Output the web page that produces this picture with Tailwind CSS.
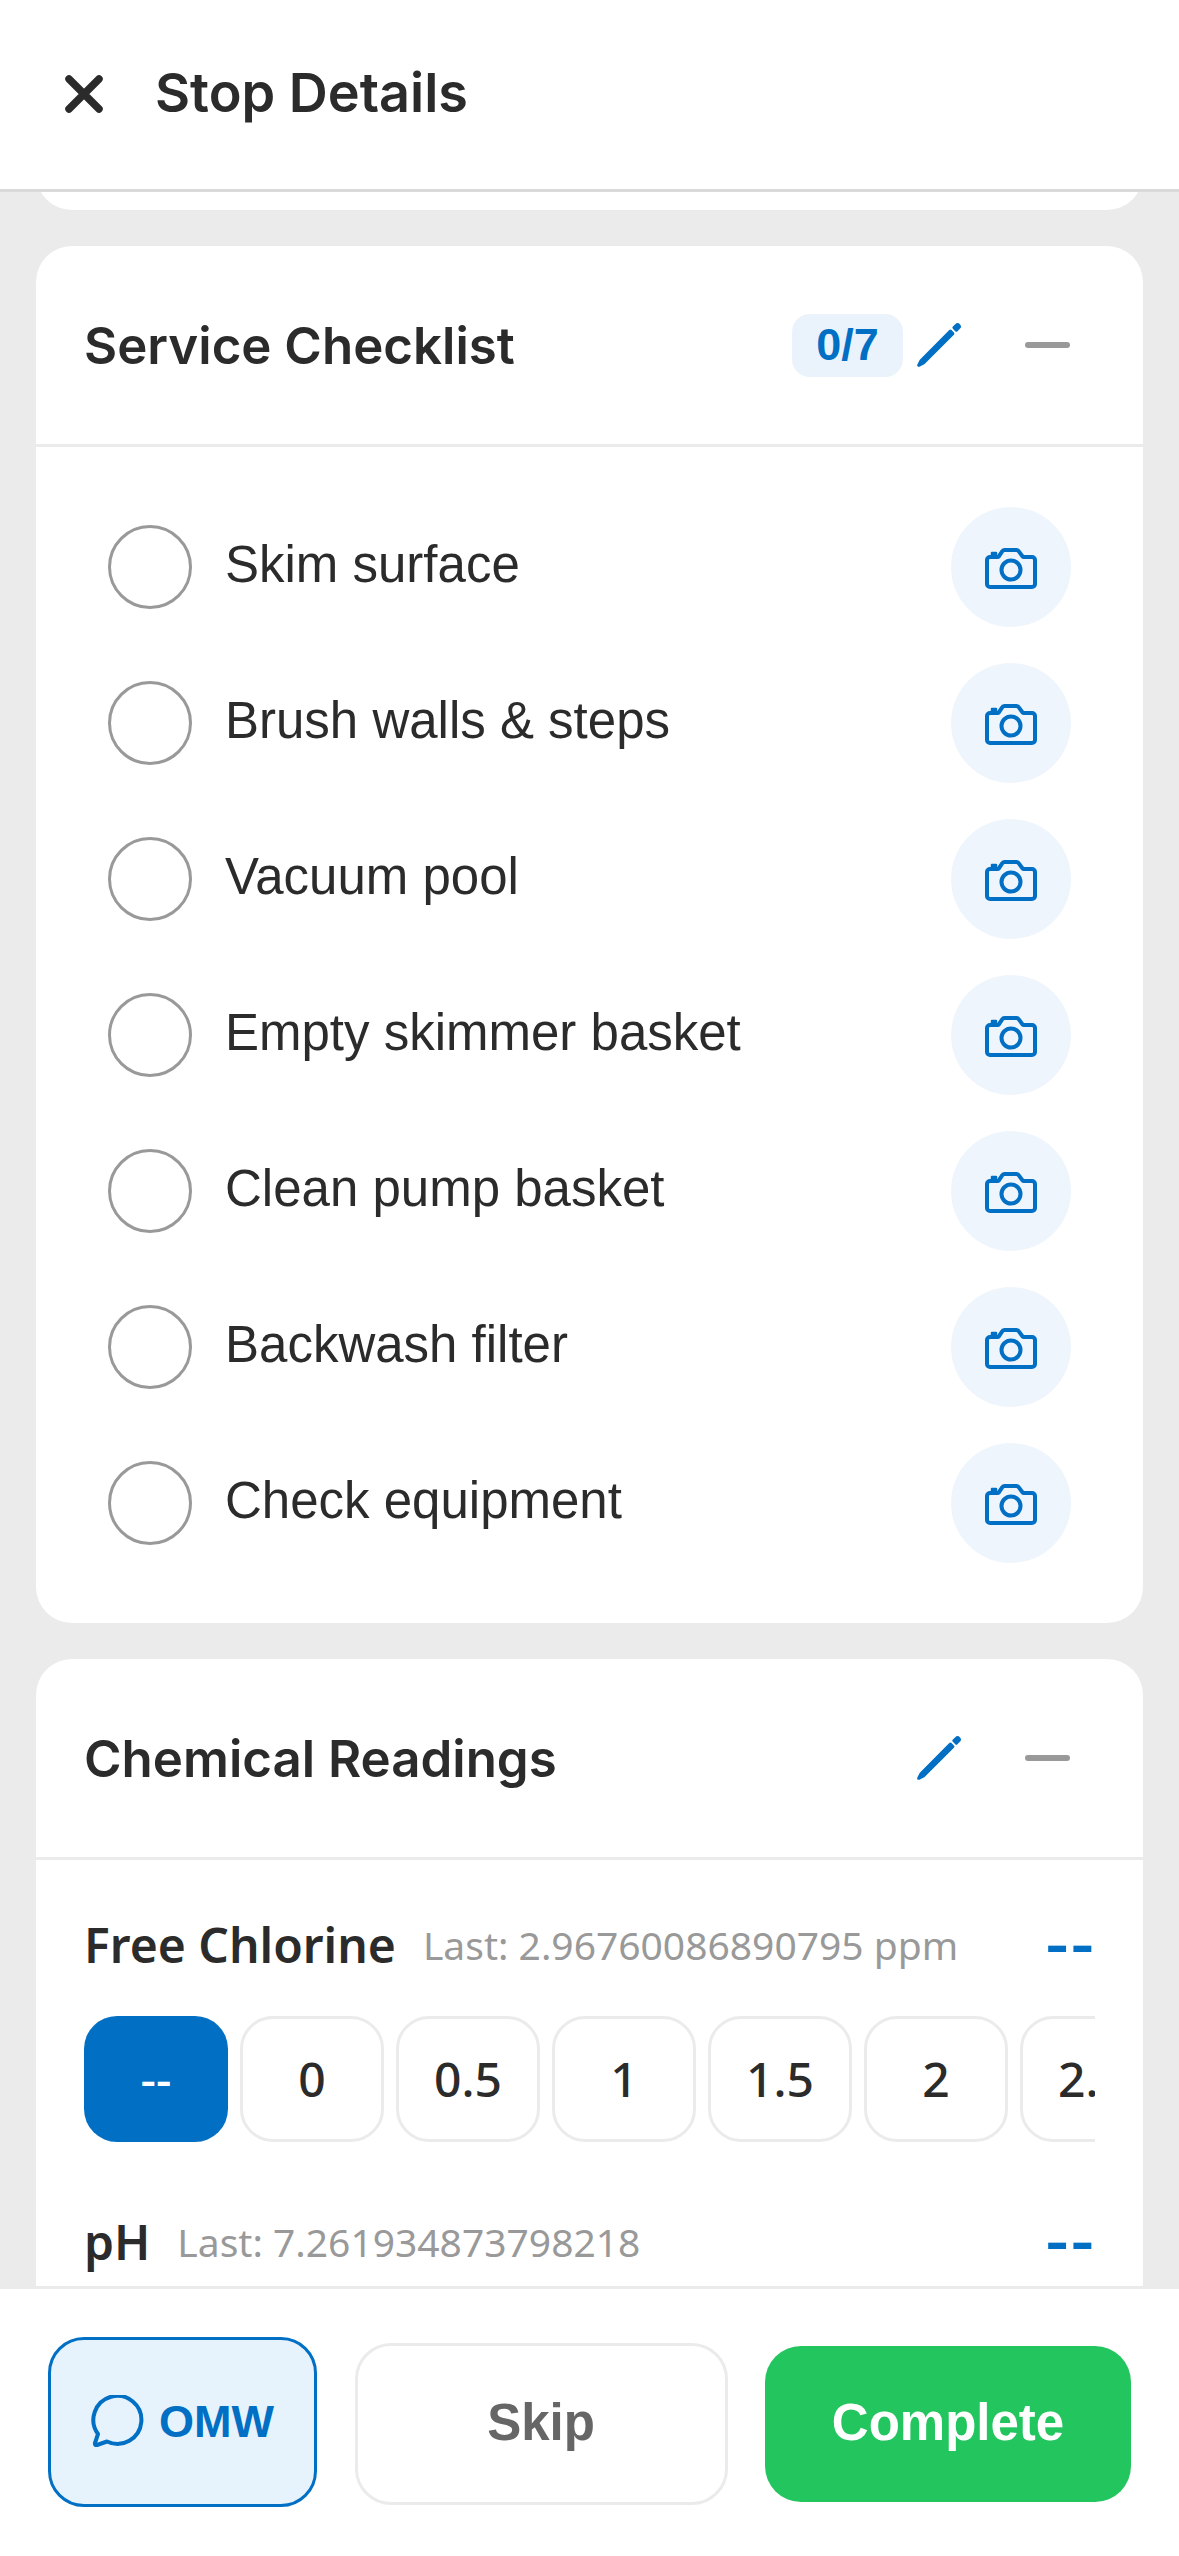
<!DOCTYPE html>
<html lang="en">
<head>
  <meta charset="UTF-8" />
  <meta name="viewport" content="width=device-width, initial-scale=1.0"/>
  <title>Stop Details</title>
  <script src="https://cdn.jsdelivr.net/npm/@tailwindcss/browser@4"></script>
</head>
<body class="h-screen flex flex-col overflow-hidden bg-[#ebebeb] text-[#2b2b2b] font-['Liberation_Sans',sans-serif]">

  <!-- header -->
  <div class="h-[192px] shrink-0 z-10 bg-white border-b-[3px] border-[#d9d9d9] flex items-center pl-[65px]">
    <svg class="w-[38px] h-[38px] mt-[-2px]" viewBox="0 0 38 38" fill="none" stroke="#2b2b2b" stroke-width="7.5" stroke-linecap="round"><path d="M4 4l30 30M34 4L4 34"/></svg>
    <h1 class="ml-[52px] mt-[-4px] text-[54px] leading-none font-semibold font-['Inter',sans-serif]">Stop Details</h1>
  </div>

  <div class="flex-1 min-h-0 overflow-hidden px-[36px]">
    <!-- previous card, scrolled away -->
    <div class="h-[100px] mt-[-82px] mb-[36px] bg-white rounded-[36px]"></div>

    <!-- service checklist -->
    <div class="bg-white rounded-[36px] mb-[36px]">
      <div class="h-[201px] border-b-[3px] border-[#ebebeb] flex items-center pl-[48px] pr-[73px]">
        <h2 class="flex-1 text-[51px] leading-none font-semibold font-['Inter',sans-serif]">Service Checklist</h2>
        <span class="w-[111px] h-[63px] rounded-[18px] bg-[#eaf3fb] text-[#016fc4] text-[45px] font-bold flex items-center justify-center">0/7</span>
        <svg class="w-[54px] h-[54px] ml-[9px]" viewBox="0 0 512 512" fill="#016fc4" stroke="#016fc4" stroke-width="30" stroke-linecap="round" stroke-linejoin="round"><path d="M364.13 125.25L87 403l-23 45 44.99-23 277.76-277.13-22.62-22.62zM420.69 68.69l-22.62 22.62 22.62 22.63 22.62-22.63a16 16 0 000-22.62h0a16 16 0 00-22.62 0z"/></svg>
        <span class="w-[45px] h-[6px] ml-[59px] rounded-full bg-[#999999]"></span>
      </div>
      <div class="pt-[60px] pb-[60px] pl-[72px] pr-[72px] flex flex-col gap-[36px]">
        <div class="h-[120px] flex items-center">
          <span class="w-[84px] h-[84px] rounded-full border-[3px] border-[#999999] shrink-0"></span>
          <span class="flex-1 ml-[33px] text-[51px] mt-[-4px]">Skim surface</span>
          <span class="w-[120px] h-[120px] rounded-full bg-[#eff5fc] flex items-center justify-center">
            <svg class="w-[52px] h-[41px] mt-[3px]" viewBox="0 0 52 41" fill="none" stroke="#016fc4" stroke-width="4" stroke-linejoin="round"><path d="M5 39h42a3 3 0 0 0 3-3V12a3 3 0 0 0-3-3h-8a2 2 0 0 1-1.6-.8L34 3.6A3 3 0 0 0 31.5 2h-12A3 3 0 0 0 17 3.6L14 8.2A2 2 0 0 1 12.4 9H5a3 3 0 0 0-3 3v24a3 3 0 0 0 3 3z"/><circle cx="26" cy="22" r="9.5"/><rect x="7" y="5" width="4" height="3" stroke-width="2.5" fill="#016fc4"/></svg>
          </span>
        </div>
        <div class="h-[120px] flex items-center">
          <span class="w-[84px] h-[84px] rounded-full border-[3px] border-[#999999] shrink-0"></span>
          <span class="flex-1 ml-[33px] text-[51px] mt-[-4px]">Brush walls &amp; steps</span>
          <span class="w-[120px] h-[120px] rounded-full bg-[#eff5fc] flex items-center justify-center">
            <svg class="w-[52px] h-[41px] mt-[3px]" viewBox="0 0 52 41" fill="none" stroke="#016fc4" stroke-width="4" stroke-linejoin="round"><path d="M5 39h42a3 3 0 0 0 3-3V12a3 3 0 0 0-3-3h-8a2 2 0 0 1-1.6-.8L34 3.6A3 3 0 0 0 31.5 2h-12A3 3 0 0 0 17 3.6L14 8.2A2 2 0 0 1 12.4 9H5a3 3 0 0 0-3 3v24a3 3 0 0 0 3 3z"/><circle cx="26" cy="22" r="9.5"/><rect x="7" y="5" width="4" height="3" stroke-width="2.5" fill="#016fc4"/></svg>
          </span>
        </div>
        <div class="h-[120px] flex items-center">
          <span class="w-[84px] h-[84px] rounded-full border-[3px] border-[#999999] shrink-0"></span>
          <span class="flex-1 ml-[33px] text-[51px] mt-[-4px]">Vacuum pool</span>
          <span class="w-[120px] h-[120px] rounded-full bg-[#eff5fc] flex items-center justify-center">
            <svg class="w-[52px] h-[41px] mt-[3px]" viewBox="0 0 52 41" fill="none" stroke="#016fc4" stroke-width="4" stroke-linejoin="round"><path d="M5 39h42a3 3 0 0 0 3-3V12a3 3 0 0 0-3-3h-8a2 2 0 0 1-1.6-.8L34 3.6A3 3 0 0 0 31.5 2h-12A3 3 0 0 0 17 3.6L14 8.2A2 2 0 0 1 12.4 9H5a3 3 0 0 0-3 3v24a3 3 0 0 0 3 3z"/><circle cx="26" cy="22" r="9.5"/><rect x="7" y="5" width="4" height="3" stroke-width="2.5" fill="#016fc4"/></svg>
          </span>
        </div>
        <div class="h-[120px] flex items-center">
          <span class="w-[84px] h-[84px] rounded-full border-[3px] border-[#999999] shrink-0"></span>
          <span class="flex-1 ml-[33px] text-[51px] mt-[-4px]">Empty skimmer basket</span>
          <span class="w-[120px] h-[120px] rounded-full bg-[#eff5fc] flex items-center justify-center">
            <svg class="w-[52px] h-[41px] mt-[3px]" viewBox="0 0 52 41" fill="none" stroke="#016fc4" stroke-width="4" stroke-linejoin="round"><path d="M5 39h42a3 3 0 0 0 3-3V12a3 3 0 0 0-3-3h-8a2 2 0 0 1-1.6-.8L34 3.6A3 3 0 0 0 31.5 2h-12A3 3 0 0 0 17 3.6L14 8.2A2 2 0 0 1 12.4 9H5a3 3 0 0 0-3 3v24a3 3 0 0 0 3 3z"/><circle cx="26" cy="22" r="9.5"/><rect x="7" y="5" width="4" height="3" stroke-width="2.5" fill="#016fc4"/></svg>
          </span>
        </div>
        <div class="h-[120px] flex items-center">
          <span class="w-[84px] h-[84px] rounded-full border-[3px] border-[#999999] shrink-0"></span>
          <span class="flex-1 ml-[33px] text-[51px] mt-[-4px]">Clean pump basket</span>
          <span class="w-[120px] h-[120px] rounded-full bg-[#eff5fc] flex items-center justify-center">
            <svg class="w-[52px] h-[41px] mt-[3px]" viewBox="0 0 52 41" fill="none" stroke="#016fc4" stroke-width="4" stroke-linejoin="round"><path d="M5 39h42a3 3 0 0 0 3-3V12a3 3 0 0 0-3-3h-8a2 2 0 0 1-1.6-.8L34 3.6A3 3 0 0 0 31.5 2h-12A3 3 0 0 0 17 3.6L14 8.2A2 2 0 0 1 12.4 9H5a3 3 0 0 0-3 3v24a3 3 0 0 0 3 3z"/><circle cx="26" cy="22" r="9.5"/><rect x="7" y="5" width="4" height="3" stroke-width="2.5" fill="#016fc4"/></svg>
          </span>
        </div>
        <div class="h-[120px] flex items-center">
          <span class="w-[84px] h-[84px] rounded-full border-[3px] border-[#999999] shrink-0"></span>
          <span class="flex-1 ml-[33px] text-[51px] mt-[-4px]">Backwash filter</span>
          <span class="w-[120px] h-[120px] rounded-full bg-[#eff5fc] flex items-center justify-center">
            <svg class="w-[52px] h-[41px] mt-[3px]" viewBox="0 0 52 41" fill="none" stroke="#016fc4" stroke-width="4" stroke-linejoin="round"><path d="M5 39h42a3 3 0 0 0 3-3V12a3 3 0 0 0-3-3h-8a2 2 0 0 1-1.6-.8L34 3.6A3 3 0 0 0 31.5 2h-12A3 3 0 0 0 17 3.6L14 8.2A2 2 0 0 1 12.4 9H5a3 3 0 0 0-3 3v24a3 3 0 0 0 3 3z"/><circle cx="26" cy="22" r="9.5"/><rect x="7" y="5" width="4" height="3" stroke-width="2.5" fill="#016fc4"/></svg>
          </span>
        </div>
        <div class="h-[120px] flex items-center">
          <span class="w-[84px] h-[84px] rounded-full border-[3px] border-[#999999] shrink-0"></span>
          <span class="flex-1 ml-[33px] text-[51px] mt-[-4px]">Check equipment</span>
          <span class="w-[120px] h-[120px] rounded-full bg-[#eff5fc] flex items-center justify-center">
            <svg class="w-[52px] h-[41px] mt-[3px]" viewBox="0 0 52 41" fill="none" stroke="#016fc4" stroke-width="4" stroke-linejoin="round"><path d="M5 39h42a3 3 0 0 0 3-3V12a3 3 0 0 0-3-3h-8a2 2 0 0 1-1.6-.8L34 3.6A3 3 0 0 0 31.5 2h-12A3 3 0 0 0 17 3.6L14 8.2A2 2 0 0 1 12.4 9H5a3 3 0 0 0-3 3v24a3 3 0 0 0 3 3z"/><circle cx="26" cy="22" r="9.5"/><rect x="7" y="5" width="4" height="3" stroke-width="2.5" fill="#016fc4"/></svg>
          </span>
        </div>
      </div>
    </div>

    <!-- chemical readings -->
    <div class="bg-white rounded-[36px]">
      <div class="h-[201px] border-b-[3px] border-[#ebebeb] flex items-center pl-[48px] pr-[73px]">
        <h2 class="flex-1 text-[51px] leading-none font-semibold font-['Inter',sans-serif]">Chemical Readings</h2>
        <svg class="w-[54px] h-[54px]" viewBox="0 0 512 512" fill="#016fc4" stroke="#016fc4" stroke-width="30" stroke-linecap="round" stroke-linejoin="round"><path d="M364.13 125.25L87 403l-23 45 44.99-23 277.76-277.13-22.62-22.62zM420.69 68.69l-22.62 22.62 22.62 22.63 22.62-22.63a16 16 0 000-22.62h0a16 16 0 00-22.62 0z"/></svg>
        <span class="w-[45px] h-[6px] ml-[59px] rounded-full bg-[#999999]"></span>
      </div>
      <div class="pt-[52px] px-[48px] pb-[60px] font-['Noto_Sans',sans-serif]">
        <div class="h-[66px] mb-[38px] flex items-center">
          <span class="text-[48px] font-semibold">Free Chlorine</span>
          <span class="ml-[27px] flex-1 text-[39px] text-[#999999]">Last: 2.96760086890795 ppm</span>
          <span class="text-[54px] font-bold text-[#016fc4] font-['Inter',sans-serif]">--</span>
        </div>
        <div class="flex gap-[12px] overflow-hidden mb-[67px]">
          <span class="w-[144px] h-[126px] shrink-0 rounded-[33px] bg-[#016fc4] text-white text-[48px] font-medium flex items-center justify-center">--</span>
          <span class="w-[144px] h-[126px] shrink-0 rounded-[33px] border-[3px] border-[#ebebeb] text-[48px] font-medium flex items-center justify-center">0</span>
          <span class="w-[144px] h-[126px] shrink-0 rounded-[33px] border-[3px] border-[#ebebeb] text-[48px] font-medium flex items-center justify-center">0.5</span>
          <span class="w-[144px] h-[126px] shrink-0 rounded-[33px] border-[3px] border-[#ebebeb] text-[48px] font-medium flex items-center justify-center">1</span>
          <span class="w-[144px] h-[126px] shrink-0 rounded-[33px] border-[3px] border-[#ebebeb] text-[48px] font-medium flex items-center justify-center">1.5</span>
          <span class="w-[144px] h-[126px] shrink-0 rounded-[33px] border-[3px] border-[#ebebeb] text-[48px] font-medium flex items-center justify-center">2</span>
          <span class="w-[144px] h-[126px] shrink-0 rounded-[33px] border-[3px] border-[#ebebeb] text-[48px] font-medium flex items-center justify-center">2.5</span>
        </div>
        <div class="h-[66px] flex items-center">
          <span class="text-[48px] font-semibold">pH</span>
          <span class="ml-[27px] flex-1 text-[39px] text-[#999999]">Last: 7.261934873798218</span>
          <span class="text-[54px] font-bold text-[#016fc4] font-['Inter',sans-serif]">--</span>
        </div>
      </div>
    </div>
  </div>

  <!-- actions -->
  <div class="h-[270px] shrink-0 z-10 bg-white border-t-[3px] border-[#ebebeb] flex items-center justify-between pl-[48px] pr-[48px] pt-[2px]">
    <button class="w-[269px] h-[170px] mt-[-3px] rounded-[36px] border-[3px] border-[#016fc4] bg-[#e6f3fc] text-[#016fc4] text-[45px] font-bold flex items-center justify-center gap-[14px]">
      <svg class="w-[54px] h-[54px]" viewBox="0 0 54 54" fill="none" stroke="#016fc4" stroke-width="4" stroke-linejoin="round"><path d="M7 39A24 24 0 1 1 16 46.5L6 50Q3.5 50.5 4 48L7 39Z"/></svg>
      OMW
    </button>
    <button class="w-[373px] h-[162px] rounded-[36px] border-[3px] border-[#ebebeb] bg-white text-[#666666] text-[51px] font-bold">Skip</button>
    <button class="w-[366px] h-[156px] rounded-[36px] bg-[#22c55e] text-white text-[51px] font-bold">Complete</button>
  </div>

</body>
</html>
